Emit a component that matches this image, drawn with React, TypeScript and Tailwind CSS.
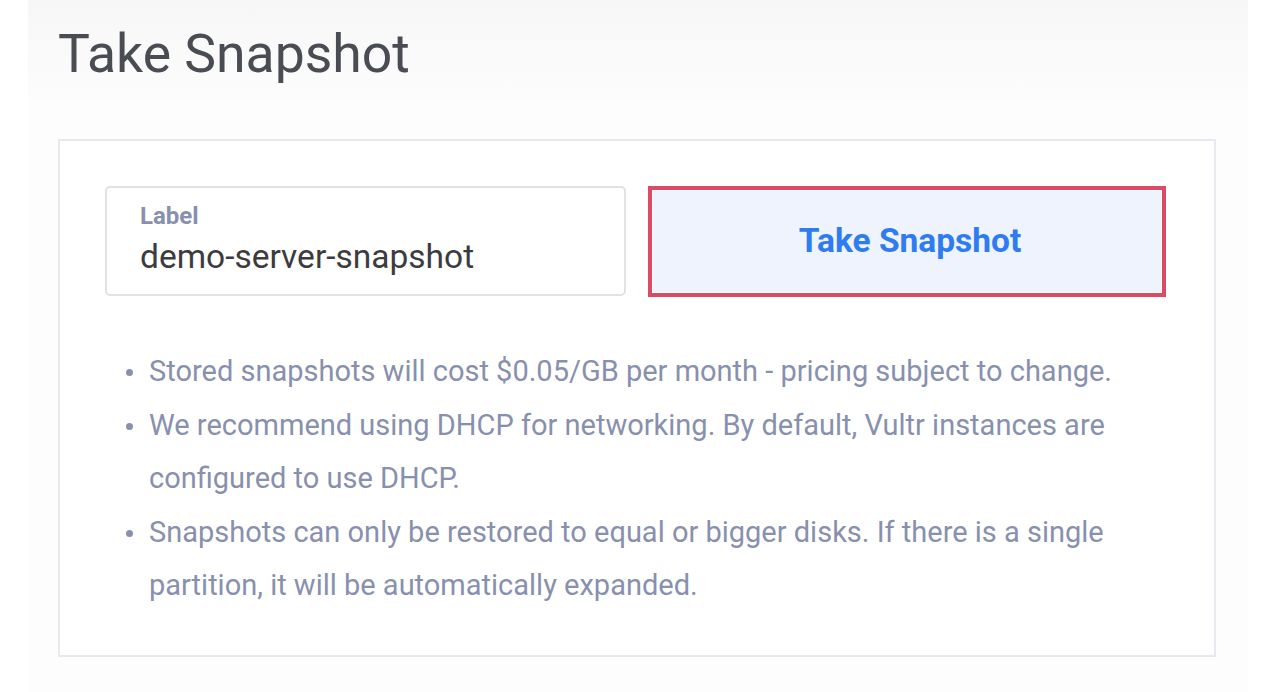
import React from "react";

export default function App() {
  const bullets = [
    "Stored snapshots will cost $0.05/GB per month - pricing subject to change.",
    "We recommend using DHCP for networking. By default, Vultr instances are configured to use DHCP.",
    "Snapshots can only be restored to equal or bigger disks. If there is a single partition, it will be automatically expanded.",
  ];
  return (
    <div className="w-[1280px] h-[692px] bg-white overflow-hidden" style={{ fontFamily: "Roboto, 'Liberation Sans', sans-serif" }}>
      <div className="ml-[28px] w-[1220px] h-[692px] bg-[#fdfdfd] flex flex-col">
        <div className="h-[98px] bg-gradient-to-b from-[#f7f7f8] to-[#fcfcfc] pl-[30px] pt-[22px]">
          <h1 className="text-[53.5px] leading-[64px] text-[#4a4c54] font-normal">Take Snapshot</h1>
        </div>
        <div className="mt-[41px] ml-[30px] w-[1158px] h-[518px] bg-white border-2 border-[#e8e8ee] pl-[45px] pr-[48px] pt-[45px]">
          <div className="flex gap-[22px]">
            <div className="w-[521px] h-[110px] rounded-[5px] border-2 border-[#e2e2e6] pl-[33px] pt-[14px]">
              <div className="text-[24px] leading-[28px] font-bold text-[#8890ae]">Label</div>
              <div className="text-[33.5px] leading-[40px] text-[#3c3c3e] mt-[7px]">demo-server-snapshot</div>
            </div>
            <div className="w-[518px] h-[111px] border-[4px] border-[#dc4a64] p-px bg-white">
              <div className="w-full h-full bg-[#eef3fd] flex items-center justify-center pl-[6px]">
                <span className="text-[33.5px] font-bold text-[#2f7cf0]">Take Snapshot</span>
              </div>
            </div>
          </div>
          <ul className="mt-[48px] pl-[21px] pr-[40px]">
            {bullets.map((b, i) => (
              <li key={i} className="flex text-[29px] leading-[53.5px] text-[#8890ae]">
                <span className="w-[23px] shrink-0 flex justify-start pt-[24px]">
                  <span className="block w-[7px] h-[7px] rounded-full bg-[#8890ae]"></span>
                </span>
                <span>{b}</span>
              </li>
            ))}
          </ul>
        </div>
      </div>
    </div>
  );
}
